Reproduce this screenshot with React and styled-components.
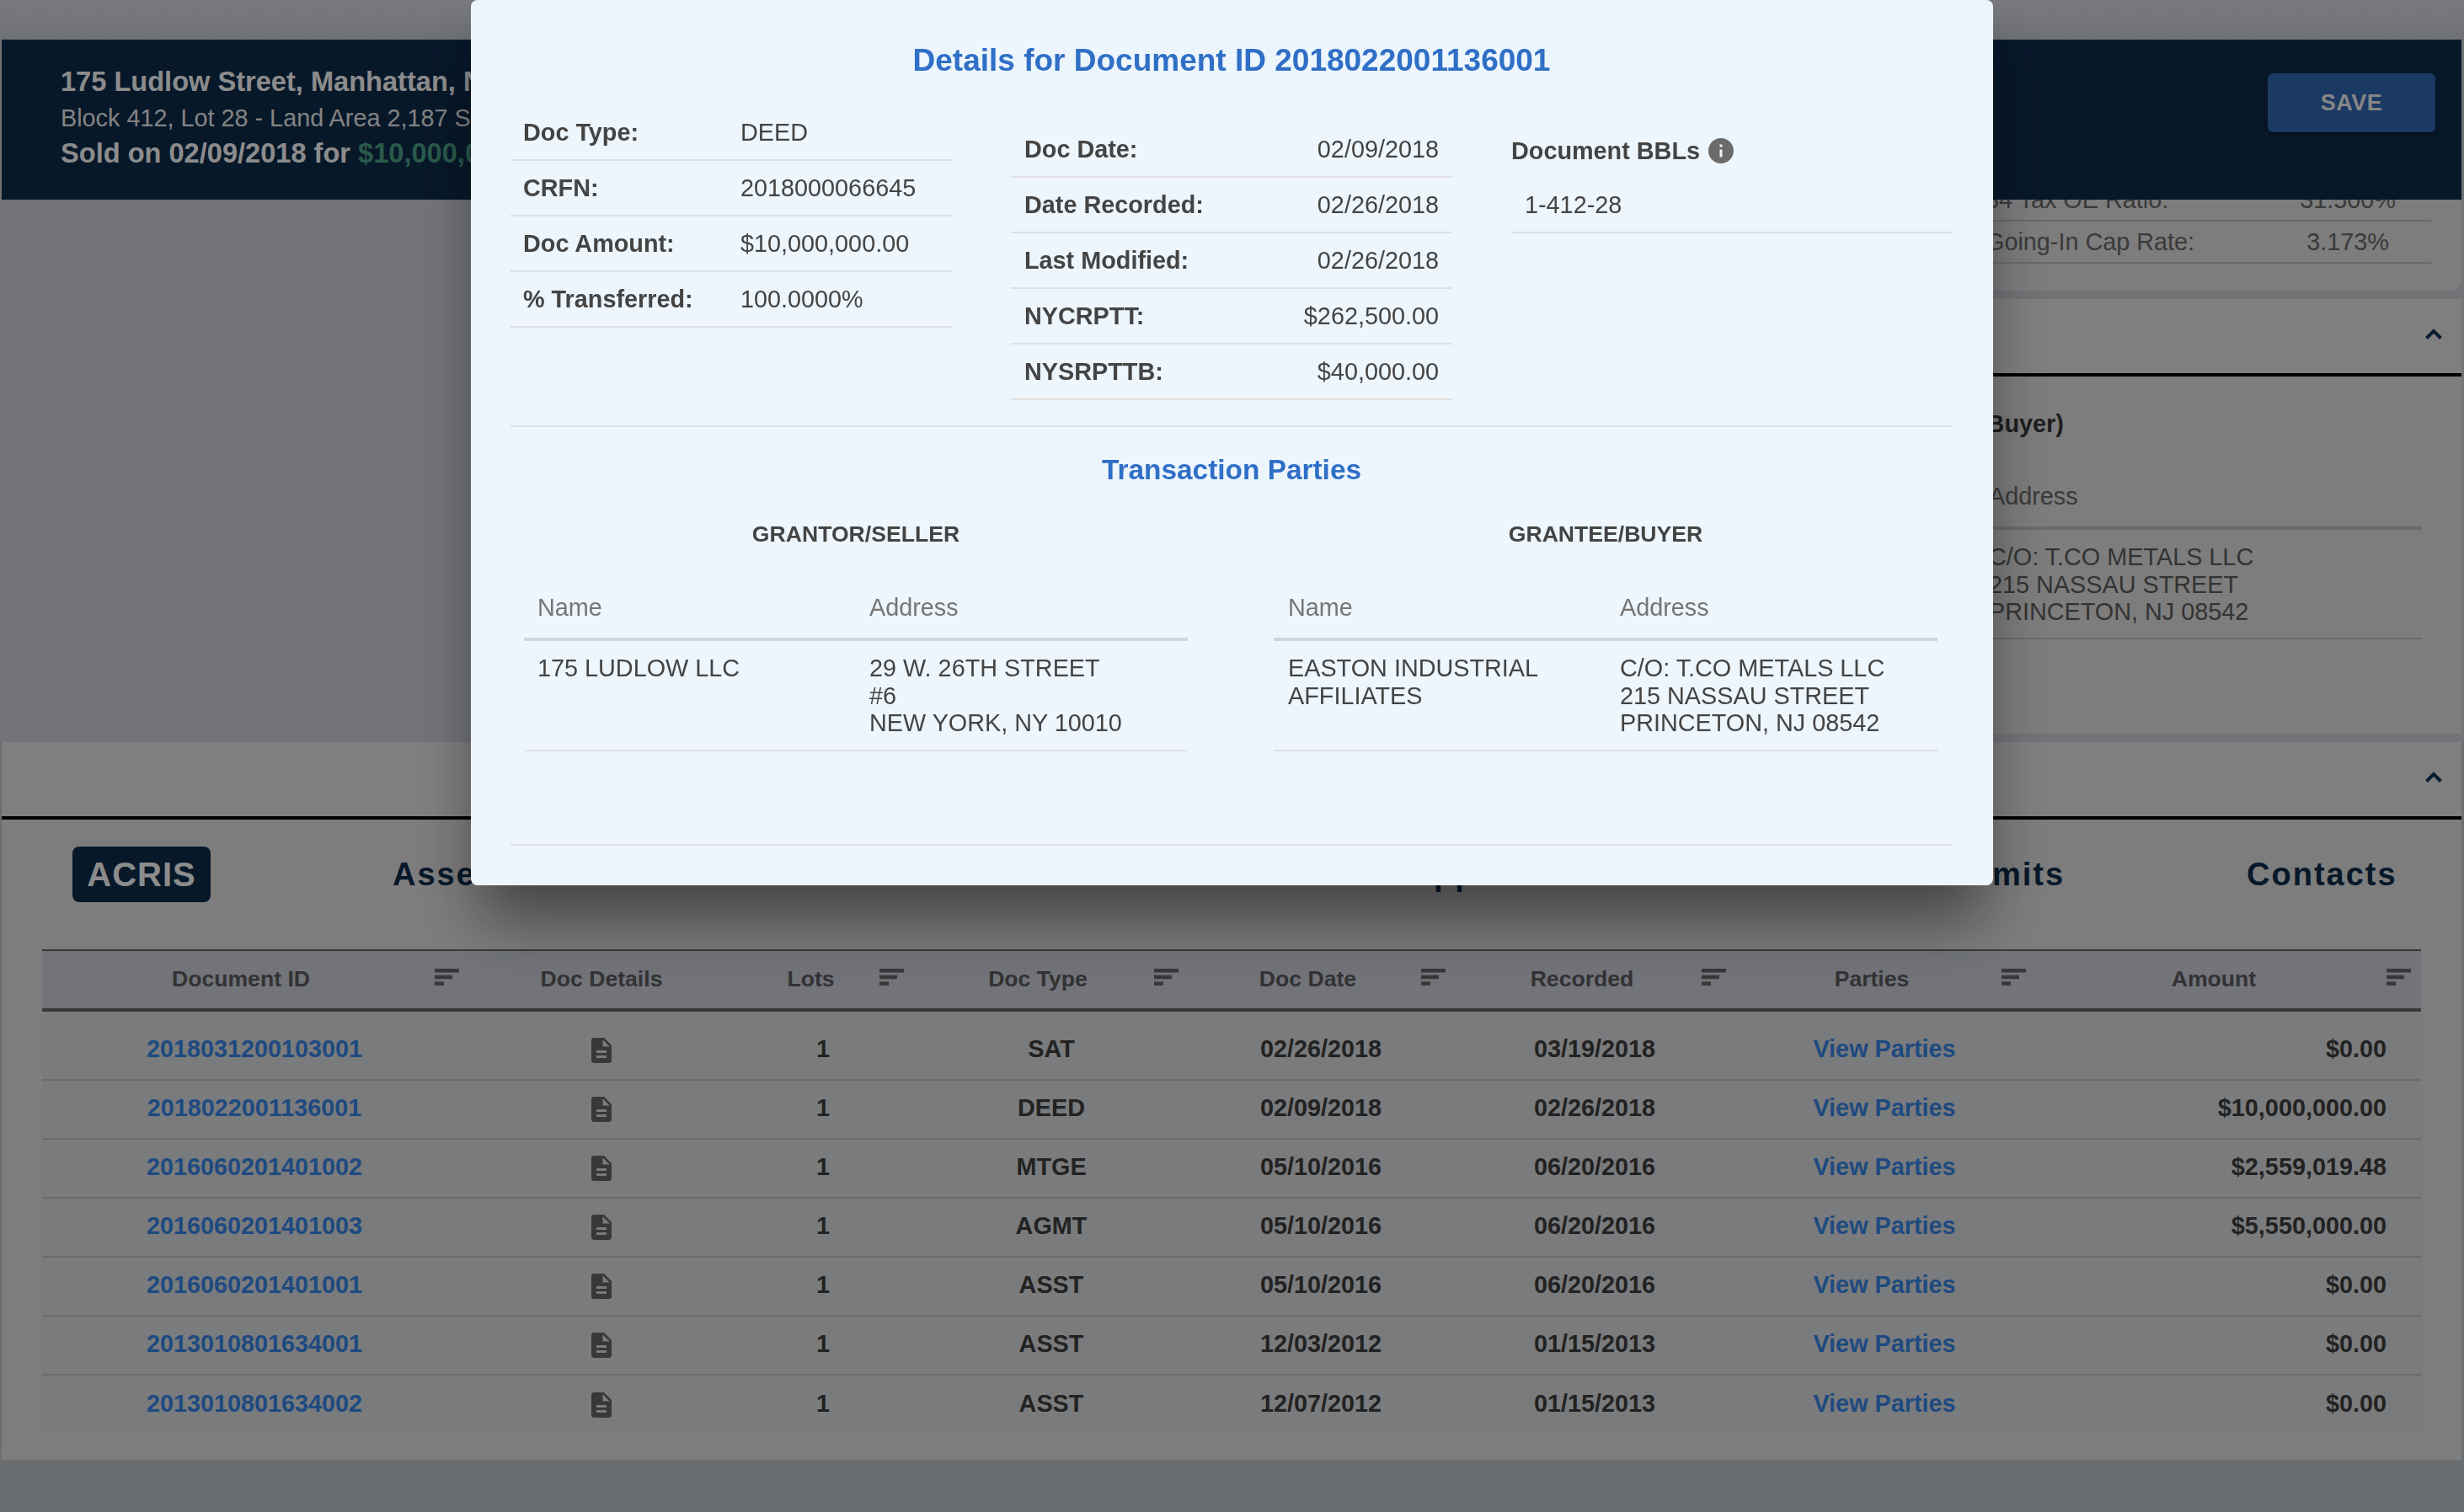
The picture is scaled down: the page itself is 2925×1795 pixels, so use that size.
import React from "react";
import styled, { createGlobalStyle } from "styled-components";

const Global = createGlobalStyle`
  html, body { margin: 0; padding: 0; }
  body { font-family: "Liberation Sans", Arial, sans-serif; font-size: 28.8px; color: #3e3e3e; background: #c4c9cd; }
  * { box-sizing: border-box; }
`;

const Page = styled.div`
  height: 1795px;
  overflow: hidden;
  padding: 47px 3px 0 2px;
  background: linear-gradient(#dcdfe4, #cacdd3 47px, #cacdd3 237px, #d1d3da 237px, #d1d3da 881px, #c4c9cd 881px);
`;
const HeaderBar = styled.header`
  height: 190px;
  background: #0d2c4c;
  display: flex;
  align-items: flex-start;
  justify-content: space-between;
  padding: 30px 31px 0 70px;
`;
const HeaderText = styled.div`
  display: flex;
  flex-direction: column;
  color: #fff;
`;
const Address = styled.div`
  font-size: 32.6px;
  font-weight: 700;
  line-height: 40px;
  color: #fff;
`;
const Sub = styled.div`
  font-size: 28.8px;
  line-height: 40px;
  margin-top: 3px;
  color: #eee;
`;
const Sold = styled.div`
  font-size: 32.6px;
  font-weight: 700;
  line-height: 40px;
  margin-top: 2px;
`;
const Money = styled.span`
  color: #4da587;
`;
const SaveButton = styled.button`
  width: 199px;
  height: 70px;
  margin-top: 10px;
  border: 0;
  border-radius: 6px;
  background: #3069b4;
  color: #f4f4f4;
  font: 700 27px "Liberation Sans", Arial, sans-serif;
  letter-spacing: 0.5px;
  box-shadow: 0 3px 6px rgba(0, 0, 0, 0.3);
`;
const Upper = styled.div`
  height: 644px;
  display: flex;
  justify-content: flex-end;
`;
const RightColumn = styled.div`
  width: 1472px;
  height: 634px;
  display: flex;
  flex-direction: column;
  gap: 10px;
`;
const SummaryCard = styled.section`
  height: 108px;
  flex: none;
  background: #e3e3e3;
  border-radius: 0 0 14px 14px;
  overflow: hidden;
  display: flex;
  flex-direction: column;
  justify-content: flex-end;
  align-items: flex-end;
  padding: 0 36px 32px 0;
`;
const SummaryRow = styled.div`
  width: 550px;
  height: 50px;
  flex: none;
  border-bottom: 2px solid #c2c2c8;
  display: grid;
  grid-template-columns: 1fr 198px;
  align-items: center;
  padding-left: 21px;
  color: #6a6a6a;
`;
const SummaryValue = styled.span`
  text-align: center;
`;
const Section = styled.section`
  display: flex;
  flex-direction: column;
  flex: ${(p) => (p.$grow ? 1 : "none")};
  background: #e8e8e8;
`;
const AccordionHead = styled.div`
  height: 92px;
  flex: none;
  border-bottom: 4px solid #000;
  display: flex;
  align-items: center;
  justify-content: flex-end;
  padding: 0 23px 6px 0;
`;
const Chevron = () => (
  <svg width="20" height="13" viewBox="0 0 20 13" fill="none">
    <path d="M1.5 11.5 L10 3 L18.5 11.5" stroke="#123457" strokeWidth="4" />
  </svg>
);
const PartiesBody = styled.div`
  flex: 1;
  background: #e3e3e3;
  border-radius: 14px;
  padding: 38px 47px 0 0;
  display: flex;
  flex-direction: column;
  align-items: flex-end;
`;
const BuyerHeading = styled.h4`
  margin: 0;
  width: 1060px;
  text-align: center;
  font-size: 28.8px;
  line-height: 36px;
  font-weight: 700;
  color: #373737;
  padding-right: 8px;
`;
const BackTable = styled.div`
  width: 1060px;
  margin-top: 38px;
`;
const BackHead = styled.div`
  display: grid;
  grid-template-columns: 1fr 1fr;
  height: 70px;
  align-items: center;
  border-bottom: 4px solid #c2c2c8;
  padding-bottom: 6px;
  color: #6a6a6a;
`;
const BackRow = styled.div`
  display: grid;
  grid-template-columns: 1fr 1fr;
  border-bottom: 2px solid #c2c2c8;
  padding: 16px 0 14px;
  line-height: 32.5px;
  color: #5d5d5d;
`;
const BackCell = styled.div`
  padding: 0 16px;
`;
const AcrisBody = styled.div`
  height: 760px;
  background: #e3e3e3;
  border-radius: 0 0 14px 14px;
  padding: 32px 48px 0;
`;
const TabBar = styled.nav`
  height: 66px;
  display: flex;
  align-items: center;
  gap: 216px;
  padding-left: 36px;
`;
const ActiveTab = styled.div`
  width: 164px;
  height: 66px;
  border-radius: 8px;
  background: #0d2c4c;
  color: #fff;
  display: flex;
  align-items: center;
  justify-content: center;
  font-size: 40px;
  font-weight: 700;
  letter-spacing: 1px;
`;
const Tab = styled.div`
  font-size: 38px;
  font-weight: 700;
  letter-spacing: 2px;
  color: #0d2c4c;
  white-space: nowrap;
  margin-left: ${(p) => p.$push || 0}px;
`;
const COLS = "504px 320px 206px 336px 304px 346px 342px 466px";
const TableHead = styled.div`
  margin-top: 56px;
  height: 74px;
  display: grid;
  grid-template-columns: ${COLS};
  border-top: 2px solid #696969;
  border-bottom: 4px solid #696969;
  background: #cfd3de;
`;
const HeadCell = styled.div`
  display: flex;
  align-items: center;
  padding-right: ${(p) => (p.$sort ? 12 : 0)}px;
  padding-bottom: 2px;
  font-size: 26.6px;
  font-weight: 700;
  color: #5d5d5d;
`;
const HeadLabel = styled.span`
  flex: 1;
  text-align: center;
  padding-left: ${(p) => p.$shift}px;
`;
const SortSvg = styled.svg`
  width: 29px;
  height: 20px;
  margin-left: -9px;
  margin-bottom: 5px;
  flex: none;
  transform: translateX(${(p) => p.$nudge}px);
`;
const SortIcon = ({ nudge }) => (
  <SortSvg viewBox="0 0 29 20" $nudge={nudge}>
    <rect x="0" y="0" width="29" height="4.5" fill="#666" />
    <rect x="0" y="7.7" width="21" height="4.5" fill="#666" />
    <rect x="0" y="15.4" width="11" height="4.5" fill="#666" />
  </SortSvg>
);
const TableBody = styled.div`
  padding-top: 12px;
  background: #dee0e3;
`;
const Row = styled.div`
  height: 70px;
  display: grid;
  grid-template-columns: ${COLS};
  align-items: center;
  border-bottom: 2px solid #c2c2c8;
  padding-bottom: 3px;
  font-weight: 700;
  font-size: 28.8px;
  &:last-child { border-bottom: 0; }
`;
const Cell = styled.div`
  text-align: ${(p) => p.$align || "center"};
  padding-right: ${(p) => (p.$align === "right" ? 41 : 0)}px;
`;
const LinkText = styled.span`
  color: #3887e9;
`;
const IconCell = styled.div`
  display: flex;
  justify-content: center;
  padding-top: 3px;
`;
const DocIcon = () => (
  <svg width="24" height="30" viewBox="4 2 16 20" fill="#666">
    <path d="M14 2H6c-1.1 0-2 .9-2 2v16c0 1.1.9 2 2 2h12c1.1 0 2-.9 2-2V8l-6-6zm2 16H8v-2h8v2zm0-4H8v-2h8v2zm-3-5V3.5L18.5 9H13z" />
  </svg>
);

const Overlay = styled.div`
  position: fixed;
  inset: 0;
  background: rgba(0, 0, 0, 0.45);
  display: flex;
  justify-content: center;
  align-items: flex-start;
`;
const Modal = styled.div`
  width: 1807px;
  height: 1051px;
  padding: 0 48px 0 47px;
  background: #edf5fd;
  border-radius: 8px;
  color: #444;
  box-shadow: 0 50px 70px -10px rgba(0, 0, 0, 0.46);
`;
const Title = styled.h2`
  margin: 0;
  height: 125px;
  padding-top: 48px;
  text-align: center;
  font-size: 37px;
  line-height: 48px;
  font-weight: 700;
  color: #2f6fc6;
`;
const TopGrid = styled.div`
  display: grid;
  grid-template-columns: repeat(3, 524px);
  column-gap: 70px;
  height: 382px;
  border-bottom: 2px solid #e0e0e0;
`;
const InfoColumn = styled.div`
  padding-top: ${(p) => p.$top || 0}px;
`;
const InfoRow = styled.div`
  height: 66px;
  border-bottom: 2px solid #e0e0e0;
  display: grid;
  grid-template-columns: ${(p) => (p.$wide ? "258px 1fr" : "1fr auto")};
  align-items: center;
  padding: 1px 16px 0 ${(p) => (p.$wide ? 15 : 16)}px;
`;
const InfoLabel = styled.span`
  font-weight: 700;
`;
const BblHead = styled.div`
  height: 66px;
  display: flex;
  align-items: center;
  gap: 10px;
  padding-top: 2px;
  font-weight: 700;
`;
const BblRow = styled.div`
  height: 66px;
  border-bottom: 2px solid #e0e0e0;
  display: flex;
  align-items: center;
  padding: 1px 0 0 16px;
`;
const InfoIcon = () => (
  <svg width="30" height="30" viewBox="2 2 20 20" fill="#6b6b6b">
    <path d="M12 2C6.48 2 2 6.48 2 12s4.48 10 10 10 10-4.48 10-10S17.52 2 12 2zm1 15h-2v-6h2v6zm0-8h-2V7h2v2z" />
  </svg>
);
const SubTitle = styled.h3`
  margin: 0;
  height: 104px;
  padding-top: 31px;
  text-align: center;
  font-size: 33.4px;
  line-height: 40px;
  font-weight: 700;
  color: #2f6fc6;
`;
const Parties = styled.div`
  display: grid;
  grid-template-columns: 788px 788px;
  column-gap: 102px;
  padding: 0 16px;
  height: 393px;
  border-bottom: 2px solid #e0e0e0;
`;
const PartyHead = styled.div`
  height: 50px;
  text-align: center;
  font-size: 26.6px;
  line-height: 47px;
  font-weight: 700;
`;
const PartyColumns = styled.div`
  display: grid;
  grid-template-columns: 1fr 1fr;
  height: 100px;
  padding-top: 44px;
  border-bottom: 4px solid #d1d5db;
  color: #757575;
`;
const PartyRow = styled.div`
  display: grid;
  grid-template-columns: 1fr 1fr;
  height: 131px;
  border-bottom: 2px solid #e0e0e0;
  padding-top: 16px;
  line-height: 32.5px;
`;
const PartyCell = styled.div`
  padding: 0 16px 0 ${(p) => (p.$inset ? 17 : 16)}px;
`;

const rows = [
  ["2018031200103001", "1", "SAT", "02/26/2018", "03/19/2018", "$0.00"],
  ["2018022001136001", "1", "DEED", "02/09/2018", "02/26/2018", "$10,000,000.00"],
  ["2016060201401002", "1", "MTGE", "05/10/2016", "06/20/2016", "$2,559,019.48"],
  ["2016060201401003", "1", "AGMT", "05/10/2016", "06/20/2016", "$5,550,000.00"],
  ["2016060201401001", "1", "ASST", "05/10/2016", "06/20/2016", "$0.00"],
  ["2013010801634001", "1", "ASST", "12/03/2012", "01/15/2013", "$0.00"],
  ["2013010801634002", "1", "ASST", "12/07/2012", "01/15/2013", "$0.00"],
];
const heads = [
  ["Document ID", 3, 0],
  ["Doc Details", null, 0],
  ["Lots", 5, 3],
  ["Doc Type", -5, 0],
  ["Doc Date", 8, 1],
  ["Recorded", -5, 2],
  ["Parties", 9, 2],
  ["Amount", 0, 6],
];
const leftInfo = [
  ["Doc Type:", "DEED"],
  ["CRFN:", "2018000066645"],
  ["Doc Amount:", "$10,000,000.00"],
  ["% Transferred:", "100.0000%"],
];
const midInfo = [
  ["Doc Date:", "02/09/2018"],
  ["Date Recorded:", "02/26/2018"],
  ["Last Modified:", "02/26/2018"],
  ["NYCRPTT:", "$262,500.00"],
  ["NYSRPTTB:", "$40,000.00"],
];
const Lines = ({ items }) => items.map((t) => <div key={t}>{t}</div>);
const sellerAddr = ["29 W. 26TH STREET", "#6", "NEW YORK, NY 10010"];
const buyerAddr = ["C/O: T.CO METALS LLC", "215 NASSAU STREET", "PRINCETON, NJ 08542"];
const buyerName = ["EASTON INDUSTRIAL", "AFFILIATES"];

export default function App() {
  return (
    <>
      <Global />
      <Page>
        <HeaderBar>
          <HeaderText>
            <Address>175 Ludlow Street, Manhattan, NY 10002</Address>
            <Sub>Block 412, Lot 28 - Land Area 2,187 SF</Sub>
            <Sold>
              Sold on 02/09/2018 for <Money>$10,000,000.00</Money>
            </Sold>
          </HeaderText>
          <SaveButton>SAVE</SaveButton>
        </HeaderBar>
        <Upper>
          <RightColumn>
            <SummaryCard>
              <SummaryRow>
                <span>34 Tax OE Ratio:</span>
                <SummaryValue>31.500%</SummaryValue>
              </SummaryRow>
              <SummaryRow>
                <span>Going-In Cap Rate:</span>
                <SummaryValue>3.173%</SummaryValue>
              </SummaryRow>
            </SummaryCard>
            <Section $grow>
              <AccordionHead>
                <Chevron />
              </AccordionHead>
              <PartiesBody>
                <BuyerHeading>Grantee (Buyer)</BuyerHeading>
                <BackTable>
                  <BackHead>
                    <BackCell>Name</BackCell>
                    <BackCell>Address</BackCell>
                  </BackHead>
                  <BackRow>
                    <BackCell>
                      <Lines items={buyerName} />
                    </BackCell>
                    <BackCell>
                      <Lines items={buyerAddr} />
                    </BackCell>
                  </BackRow>
                </BackTable>
              </PartiesBody>
            </Section>
          </RightColumn>
        </Upper>
        <Section>
          <AccordionHead>
            <Chevron />
          </AccordionHead>
          <AcrisBody>
            <TabBar>
              <ActiveTab>ACRIS</ActiveTab>
              <Tab>Assessments</Tab>
              <Tab $push={622}>DOB Applications</Tab>
              <Tab $push={54}>DOB Permits</Tab>
              <Tab>Contacts</Tab>
            </TabBar>
            <TableHead>
              {heads.map(([label, nudge, shift]) => (
                <HeadCell key={label} $sort={nudge !== null}>
                  <HeadLabel $shift={shift}>{label}</HeadLabel>
                  {nudge !== null && <SortIcon nudge={nudge} />}
                </HeadCell>
              ))}
            </TableHead>
            <TableBody>
              {rows.map((r) => (
                <Row key={r[0]}>
                  <Cell>
                    <LinkText>{r[0]}</LinkText>
                  </Cell>
                  <IconCell>
                    <DocIcon />
                  </IconCell>
                  <Cell>{r[1]}</Cell>
                  <Cell>{r[2]}</Cell>
                  <Cell>{r[3]}</Cell>
                  <Cell>{r[4]}</Cell>
                  <Cell>
                    <LinkText>View Parties</LinkText>
                  </Cell>
                  <Cell $align="right">{r[5]}</Cell>
                </Row>
              ))}
            </TableBody>
          </AcrisBody>
        </Section>
      </Page>
      <Overlay>
        <Modal>
          <Title>Details for Document ID 2018022001136001</Title>
          <TopGrid>
            <InfoColumn>
              {leftInfo.map(([k, v]) => (
                <InfoRow key={k} $wide>
                  <InfoLabel>{k}</InfoLabel>
                  <span>{v}</span>
                </InfoRow>
              ))}
            </InfoColumn>
            <InfoColumn $top={20}>
              {midInfo.map(([k, v]) => (
                <InfoRow key={k}>
                  <InfoLabel>{k}</InfoLabel>
                  <span>{v}</span>
                </InfoRow>
              ))}
            </InfoColumn>
            <InfoColumn $top={20}>
              <BblHead>
                Document BBLs
                <InfoIcon />
              </BblHead>
              <BblRow>1-412-28</BblRow>
            </InfoColumn>
          </TopGrid>
          <SubTitle>Transaction Parties</SubTitle>
          <Parties>
            <div>
              <PartyHead>GRANTOR/SELLER</PartyHead>
              <PartyColumns>
                <PartyCell>Name</PartyCell>
                <PartyCell>Address</PartyCell>
              </PartyColumns>
              <PartyRow>
                <PartyCell>175 LUDLOW LLC</PartyCell>
                <PartyCell>
                  <Lines items={sellerAddr} />
                </PartyCell>
              </PartyRow>
            </div>
            <div>
              <PartyHead>GRANTEE/BUYER</PartyHead>
              <PartyColumns>
                <PartyCell $inset>Name</PartyCell>
                <PartyCell $inset>Address</PartyCell>
              </PartyColumns>
              <PartyRow>
                <PartyCell $inset>
                  <Lines items={buyerName} />
                </PartyCell>
                <PartyCell $inset>
                  <Lines items={buyerAddr} />
                </PartyCell>
              </PartyRow>
            </div>
          </Parties>
        </Modal>
      </Overlay>
    </>
  );
}
